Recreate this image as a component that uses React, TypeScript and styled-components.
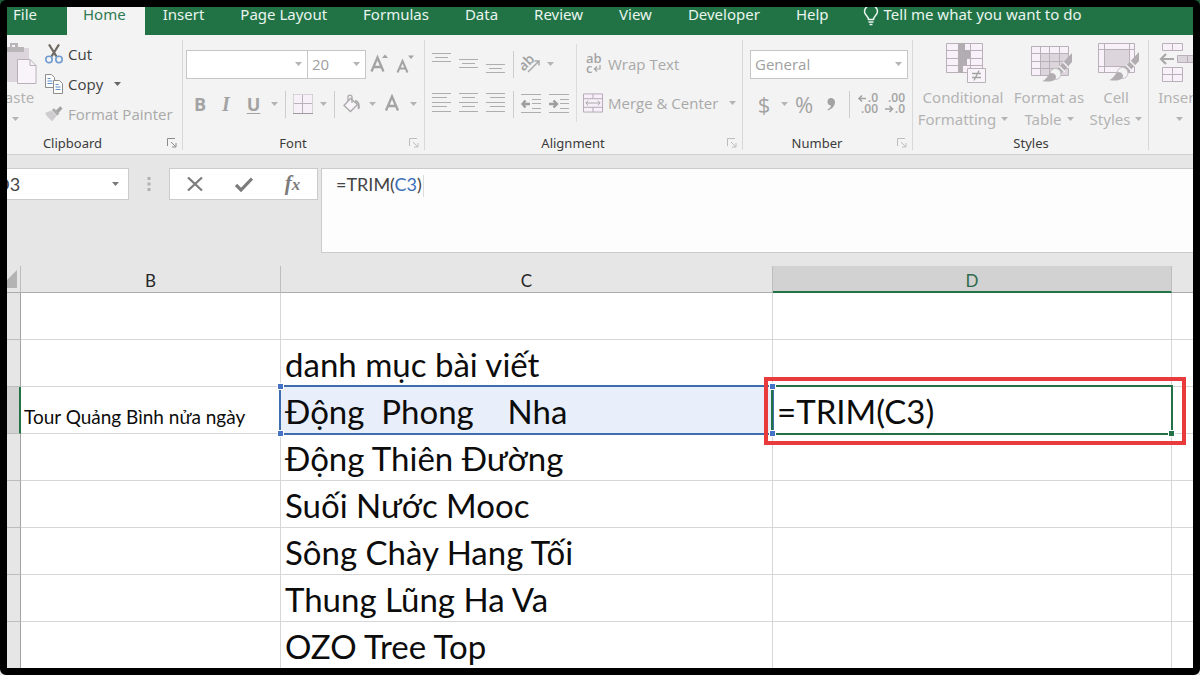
import React from 'react';
import styled, { createGlobalStyle, css } from 'styled-components';

const uiFont = '"Open Sans", "Noto Sans", sans-serif';
const wideUiFont = '"Noto Sans", "Open Sans", sans-serif';
const cellFont = 'Lato, "Noto Sans", sans-serif';
const muted = '#a9a9a9';
const iconLine = '#b9b0ba';

const GlobalStyle = createGlobalStyle`
  *, *::before, *::after { box-sizing: border-box; }
  body {
    margin: 0;
    background: linear-gradient(#1c5b38, #e6e6e6);
    font-family: ${uiFont};
  }
  button, input, select { font: inherit; color: inherit; }
`;

const Window = styled.main`
  height: 100vh;
  display: flex;
  flex-direction: column;
  overflow: hidden;
  border: 7px solid #000;
  border-radius: 6px;
  background: #fff;
`;

/* ---------- tabs ---------- */

const TabBar = styled.nav`
  display: flex;
  flex: none;
  height: 28px;
  background: #217346;
  overflow: hidden;
`;

const Tab = styled.button<{ $active?: boolean; $file?: boolean }>`
  flex: none;
  display: flex;
  align-items: flex-start;
  border: 0;
  padding: ${p => (p.$file ? '0 30px 0 6px' : p.$active ? '0 19px 0 16px' : '0 18px')};
  font-family: ${wideUiFont};
  font-size: 15px;
  line-height: 14px;
  white-space: nowrap;
  color: ${p => (p.$active ? '#2f7a52' : '#e9f5ee')};
  background: ${p => (p.$active ? '#f3f3f3' : 'transparent')};
`;

const TellMe = styled(Tab)`
  gap: 5px;
  padding: 0 16px;
`;

/* ---------- ribbon ---------- */

const Ribbon = styled.section`
  flex: none;
  display: flex;
  height: 120px;
  overflow: hidden;
  background: #f3f3f3;
  border-bottom: 1px solid #cfcfcf;
`;

const Group = styled.div<{ $w?: number; $bleed?: number }>`
  flex: ${p => (p.$w ? `0 0 ${p.$w}px` : '1 0 0')};
  min-width: 0;
  margin-left: ${p => -(p.$bleed ?? 0)}px;
  display: flex;
  flex-direction: column;
  position: relative;
  &:not(:last-child)::after {
    content: '';
    position: absolute;
    right: 0;
    top: 5px;
    bottom: 4px;
    width: 1px;
    background: #d8d8d8;
  }
`;

const GroupBody = styled.div<{ $pad?: string }>`
  height: 98px;
  display: flex;
  padding: ${p => p.$pad ?? '0'};
`;

const GroupFooter = styled.div`
  display: flex;
  align-items: center;
  height: 20px;
  font-family: ${wideUiFont};
  font-size: 13px;
  line-height: 20px;
  color: #3b3b3b;
`;

const GroupName = styled.span`
  flex: 1;
  text-align: center;
`;

const Launcher = styled.button<{ $strong?: boolean }>`
  display: flex;
  width: 22px;
  border: 0;
  padding: 0 0 0 6px;
  background: none;
  color: ${p => (p.$strong ? '#8a8a8a' : '#bdbdbd')};
`;

const Stack = styled.div`
  display: flex;
  flex-direction: column;
`;

const ClipboardList = styled(Stack)`
  padding-left: 8px;
`;

const AlignStack = styled(Stack)`
  width: 148px;
  padding-top: 9px;
`;

const Row = styled.div<{ $pad?: number }>`
  display: flex;
  align-items: center;
  height: 40px;
  padding-left: ${p => p.$pad ?? 0}px;
`;

const Command = styled.button<{ $h?: number }>`
  display: flex;
  align-items: center;
  gap: 5px;
  height: ${p => p.$h ?? 40}px;
  border: 0;
  padding: 0;
  background: none;
  font-size: 15px;
  white-space: nowrap;
  color: #3f3f3f;
  &:disabled { color: ${muted}; }
`;

const CaretSlot = styled.span`
  display: flex;
  margin-left: 6px;
`;

const Tool = styled.button<{ $w: number }>`
  flex: none;
  display: flex;
  align-items: center;
  justify-content: center;
  width: ${p => p.$w}px;
  height: 32px;
  border: 0;
  padding: 0;
  background: none;
  font-size: 18px;
  line-height: 24px;
  color: #a3a3a3;
`;

const Glyph = styled.span<{ $kind: 'bold' | 'italic' | 'underline' }>`
  font-weight: 700;
  ${p => p.$kind === 'italic' && css`
    font-family: "Liberation Serif", serif;
    font-style: italic;
    font-size: 20px;
  `}
  ${p => p.$kind === 'underline' && css`
    text-decoration: underline;
    text-decoration-thickness: 1px;
    text-underline-offset: 2px;
  `}
`;

const Symbol = styled.span`
  font-size: 22px;
  line-height: 28px;
`;

const Separator = styled.span<{ $w: number }>`
  flex: none;
  width: ${p => p.$w}px;
  height: 27px;
  display: flex;
  justify-content: center;
  &::before {
    content: '';
    width: 1px;
    background: #cdcdcd;
  }
`;

const Divided = styled(Stack)`
  margin-top: 9px;
  height: 78px;
  padding-left: 6px;
  border-left: 1px solid #dcdcdc;
`;

const SelectBox = styled.label<{ $w: number }>`
  position: relative;
  display: flex;
  width: ${p => p.$w}px;
  height: 29px;
  border: 1px solid #c6c6c6;
  background: #fff;
  & + & { margin-left: -1px; }
  svg { position: absolute; right: 5px; top: 11px; }
`;

const Select = styled.select`
  appearance: none;
  width: 100%;
  border: 0;
  padding: 0 4px;
  background: transparent;
  font-size: 15px;
  color: #a0a0a0;
  opacity: 1;
`;

const BigCommand = styled.button<{ $w: number; $top?: number }>`
  flex: none;
  display: flex;
  flex-direction: column;
  align-items: center;
  width: ${p => p.$w}px;
  border: 0;
  padding: ${p => p.$top ?? 0}px 0 0;
  background: none;
  font-family: ${wideUiFont};
  font-size: 15px;
  line-height: 22px;
  white-space: nowrap;
  color: #b3b3b3;
`;

const BigIcon = styled.span<{ $indent?: boolean }>`
  display: flex;
  height: 44px;
  padding-left: ${p => (p.$indent ? 5 : 0)}px;
`;

const BigLine = styled.span`
  display: flex;
  align-items: center;
  gap: 5px;
  height: 22px;
`;

/* ---------- formula bar ---------- */

const FormulaBar = styled.section`
  flex: none;
  display: flex;
  align-items: flex-start;
  padding: 13px 0;
  background: #e6e6e6;
`;

const NameBox = styled.div`
  flex: none;
  display: flex;
  align-items: center;
  width: 122px;
  height: 32px;
  overflow: hidden;
  border: 1px solid #cbcbcb;
  border-left: 0;
  background: #fff;
  padding-right: 9px;
`;

const NameInput = styled.input`
  flex: 1;
  min-width: 0;
  margin-left: -11px;
  border: 0;
  padding: 0;
  outline: 0;
  font-family: ${cellFont};
  font-size: 18px;
  color: #444;
`;

const DotGrip = styled.span`
  flex: none;
  display: flex;
  justify-content: center;
  align-items: center;
  width: 40px;
  height: 32px;
`;

const EntryButtons = styled.div`
  flex: none;
  display: flex;
  width: 149px;
  height: 32px;
  border: 1px solid #cbcbcb;
  background: #fff;
`;

const EntryButton = styled.button`
  flex: 1;
  display: flex;
  align-items: center;
  justify-content: center;
  border: 0;
  padding: 0;
  background: none;
  color: #7c7c7c;
`;

const FxMark = styled.span`
  font: italic 700 21px/24px "Liberation Serif", serif;
  small { font-size: 17px; }
`;

const FormulaInput = styled.div`
  flex: 1;
  min-width: 0;
  height: 85px;
  margin-left: 3px;
  padding: 3px 14px;
  border: 1px solid #cbcbcb;
  border-right: 0;
  background: #fdfdfd;
  font-family: ${cellFont};
  font-size: 18px;
  line-height: 24px;
  color: #444;
  outline: 0;
`;

const Reference = styled.span`
  color: #3a6fb7;
`;

const Caret = styled.span`
  display: inline-block;
  width: 1px;
  height: 22px;
  margin-left: 1px;
  vertical-align: middle;
  background: #dcdcdc;
`;

/* ---------- sheet ---------- */

const Sheet = styled.table`
  flex: none;
  width: 100%;
  table-layout: fixed;
  border-collapse: separate;
  border-spacing: 0;
  font-family: ${cellFont};
`;

const ColumnHead = styled.th<{ $selected?: boolean }>`
  height: 27px;
  padding: 4px 0 0;
  font-size: 17px;
  font-weight: 400;
  line-height: 20px;
  color: ${p => (p.$selected ? '#2f6b4c' : '#262626')};
  background: ${p => (p.$selected ? '#d2d2d2' : '#e6e6e6')};
  border-right: 1px solid #bdbdbd;
  border-bottom: ${p => (p.$selected ? '2px solid #217346' : '1px solid #ababab')};
  &:last-child { border-right: 0; }
`;

const CornerHead = styled(ColumnHead)`
  padding: 0;
  svg { display: block; }
`;

const RowHead = styled.th<{ $selected?: boolean }>`
  height: 47px;
  padding: 0;
  background: ${p => (p.$selected ? '#d2d2d2' : '#e6e6e6')};
  border-right: ${p => (p.$selected ? '2px solid #217346' : '1px solid #a3a3a3')};
  border-bottom: 1px solid #bdbdbd;
`;

const Cell = styled.td<{ $small?: boolean }>`
  position: relative;
  height: 47px;
  padding: ${p => (p.$small ? '0 2px 4px 3px' : '2px 4px 0')};
  border-right: 1px solid #d6d6d6;
  border-bottom: 1px solid #d6d6d6;
  font-size: ${p => (p.$small ? 19 : 33)}px;
  line-height: ${p => (p.$small ? 24 : 44)}px;
  vertical-align: ${p => (p.$small ? 'bottom' : 'middle')};
  white-space: pre;
  color: #0c0c0c;
  &:last-child { border-right: 0; }
`;

const ReferencedCell = styled(Cell)`
  background: #e9effa;
`;

const CellInput = styled.input`
  display: block;
  width: 100%;
  height: 44px;
  border: 0;
  padding: 0;
  outline: 0;
  background: transparent;
`;

const Outline = styled.span<{ $color: string }>`
  position: absolute;
  inset: -2px;
  z-index: ${p => (p.$color === '#217346' ? 2 : 1)};
  border: 2px solid ${p => p.$color};
  pointer-events: none;
`;

const Handle = styled.span<{ $at: 'tl' | 'bl' | 'br'; $color: string }>`
  position: absolute;
  z-index: 3;
  width: 5px;
  height: 5px;
  background: ${p => p.$color};
  outline: 1px solid #fff;
  ${p => (p.$at[0] === 't' ? 'top: -3px;' : 'bottom: -3px;')}
  ${p => (p.$at[1] === 'l' ? 'left: -3px;' : 'right: -3px;')}
`;

const Highlight = styled.span`
  position: absolute;
  z-index: 4;
  inset: -10px -15px -12px -9px;
  border: 4px solid #e93b3b;
  pointer-events: none;
`;

/* ---------- icons ---------- */

const Down = ({ color = '#b4b4b4' }: { color?: string }) => (
  <svg width="7" height="4" viewBox="0 0 7 4" aria-hidden="true"><path d="M0 0h7L3.500 4z" fill={color} /></svg>
);

const LauncherIcon = () => (
  <svg width="10" height="10" viewBox="0 0 10 10" fill="none" stroke="currentColor" aria-hidden="true">
    <path d="M.5 8V.5H8M4 4l4.500 4.500M9 5v4H5" />
  </svg>
);

const Bulb = () => (
  <svg width="16" height="19" viewBox="0 0 16 19" fill="none" stroke="#e9f5ee" strokeWidth="1.500" aria-hidden="true">
    <path d="M5.500 12.500c0-3-4-4.500-4-8C1.500 1 4.500-1.500 8-1.500S14.500 1 14.500 4.500c0 3.500-4 5-4 8zM5.500 15h5M6.500 17.500h3" />
  </svg>
);

const PasteIcon = () => (
  <svg width="44" height="44" viewBox="0 0 44 44" aria-hidden="true">
    <path d="M2 6h34v34H2z" fill="#dcd6dc" />
    <path d="M10 5h7V1h8v4h6v5H10z" fill="#b9b5b9" />
    <path d="M19 3h3v2h-3z" fill="#f3f3f3" />
    <path d="M24.500 17.500H37l6 6v18H24.500z" fill="#f8f4f9" stroke={iconLine} />
    <path d="M37 17.500v6h6" fill="none" stroke={iconLine} />
  </svg>
);

const CutIcon = () => (
  <svg width="18" height="20" viewBox="0 0 18 20" fill="none" aria-hidden="true">
    <path d="M4 .5l7.500 12M14 .5l-7.500 12" stroke="#6e6862" strokeWidth="2.200" />
    <circle cx="4" cy="15.500" r="3.200" stroke="#6f9bd0" strokeWidth="1.600" />
    <circle cx="14" cy="15.500" r="3.200" stroke="#6f9bd0" strokeWidth="1.600" />
  </svg>
);

const CopyIcon = () => (
  <svg width="18" height="20" viewBox="0 0 18 20" fill="#fdfdfd" stroke="#8d8d8d" aria-hidden="true">
    <path d="M.5.500h6l3 3v10h-9z" />
    <path d="M2.500 4.500h3M2.500 7h5M2.500 9.500h5" stroke="#5f8fc8" />
    <path d="M8.500 6.500h6l3 3v10h-9z" />
    <path d="M10.500 10.500h3M10.500 13h5M10.500 15.500h5" stroke="#5f8fc8" />
  </svg>
);

const BrushIcon = () => (
  <svg width="18" height="18" viewBox="0 0 20 18" aria-hidden="true">
    <path d="M0 8l7-3 6 6-5 6C5 15 2 12 0 8z" fill="#cfcccf" />
    <path d="M7.500 4.500L10 2.500l6 6-2.500 2.500z" fill="#adadad" />
    <path d="M12 5l5-4.500 2.500 2.500L15 8z" fill="#a3a3a3" />
  </svg>
);

const GrowFont = ({ shrink }: { shrink?: boolean }) => (
  <svg width="19" height="22" viewBox="0 0 19 22" aria-hidden="true">
    {shrink
      ? <><path d="M1.500 19.500L6.500 8l5 11.500M3.500 15.500h6" fill="none" stroke="#a3a3a3" strokeWidth="2" /><path d="M12 2.500h6L15 6z" fill="#a3a3a3" /></>
      : <><path d="M1.500 18.500L7.500 4.500l6 14M3.500 14h8" fill="none" stroke="#a3a3a3" strokeWidth="2.300" /><path d="M12 5h6l-3-3.500z" fill="#a3a3a3" /></>}
  </svg>
);

const BordersIcon = () => (
  <svg width="20" height="20" viewBox="0 0 20 20" fill="none" stroke={iconLine} aria-hidden="true">
    <path d="M.5.500h19v19H.5z" fill="#f7f0f8" stroke="none" />
    <path d="M.5.500h19M.5.500v19M19.500.500v19" strokeDasharray="1 1" />
    <path d="M9.500 1v18M1 9.500h18" />
    <path d="M0 19.500h20" stroke="#a09aa0" />
  </svg>
);

const FillIcon = () => (
  <svg width="18" height="20" viewBox="0 0 18 20" fill="none" stroke="#a9a9a9" strokeWidth="1.300" aria-hidden="true">
    <path d="M7.500 4.500L1 11.500l6.500 6 7-7z" fill="#f8f4f9" />
    <path d="M5 7V3c0-2.500 4-2.500 4 0v6" />
    <path d="M12 7c3 0 4.500 3 3.500 8" strokeWidth="2" />
  </svg>
);

const FontColorIcon = () => (
  <svg width="16" height="20" viewBox="0 0 16 20" fill="none" stroke="#a3a3a3" strokeWidth="2.300" aria-hidden="true">
    <path d="M2 16.500L8 2.500l6 14M4 12h8" />
  </svg>
);

const Lines = ({ rows }: { rows: [number, number, number][] }) => (
  <svg width="19" height="22" viewBox="0 0 19 22" stroke="#aeaeae" aria-hidden="true">
    {rows.map(([y, a, b]) => <path key={y} d={`M${a} ${y}.5H${b}`} />)}
  </svg>
);

const valign = (y: number): [number, number, number][] => [[y, 0, 19], [y + 4, 3, 16], [y + 8, 0, 19]];
const halign = (a: number, b: number): [number, number, number][] => [[0, 0, 19], [4, a, b], [9, 0, 19], [13, a, b], [18, 0, 19]];

const AngleIcon = () => (
  <svg width="20" height="20" viewBox="0 0 20 20" fill="none" stroke="#a9a9a9" aria-hidden="true">
    <text x="-2" y="13" transform="rotate(-45 6 10)" fontSize="14" fontWeight="600" fill="#a0a0a0" stroke="none">ab</text>
    <path d="M7 18L18 7M13.500 7H18v4.500" strokeWidth="1.500" />
  </svg>
);

const IndentIcon = ({ inward }: { inward?: boolean }) => (
  <svg width="20" height="20" viewBox="0 0 20 20" stroke="#aeaeae" aria-hidden="true">
    <path d="M0 .5h20M11 5.500h9M11 9.500h9M11 14.500h9M0 18.500h20" />
    {inward
      ? <path d="M0 10h7M4.500 6.500L8 10l-3.500 3.500" fill="none" stroke="#9e9e9e" strokeWidth="2.400" />
      : <path d="M2 10h7M4.500 6.500L1.500 10l3 3.500" fill="none" stroke="#9e9e9e" strokeWidth="2.400" />}
  </svg>
);

const WrapIcon = () => (
  <svg width="20" height="22" viewBox="0 0 20 22" aria-hidden="true">
    <g fontSize="13" fontWeight="600" fill="#a3a3a3">
      <text x="3" y="10">ab</text>
      <text x="3" y="20">c</text>
    </g>
    <path d="M17 12v4h-5M14 13.500L11.500 16l2.500 2.500" fill="none" stroke="#a3a3a3" strokeWidth="1.200" />
  </svg>
);

const MergeIcon = () => (
  <svg width="20" height="20" viewBox="0 0 21 20" fill="none" stroke="#b3a6b5" aria-hidden="true">
    <path d="M.5.500h20v19H.5z" fill="#f7f0f8" />
    <path d="M.5 5.500h20M.5 14.500h20M10.500.500v5M10.500 14.500v5" />
    <path d="M3 10h15M5.500 7.500L3 10l2.500 2.500M15.500 7.500L18 10l-2.500 2.500" stroke="#a3a3a3" />
  </svg>
);

const DecimalIcon = ({ less }: { less?: boolean }) => (
  <svg width="22" height="22" viewBox="0 0 22 22" aria-hidden="true">
    <g fontSize="12" fontWeight="600" fill="#a3a3a3">
      <text x="21" y="9" textAnchor="end">{less ? '.00' : '.0'}</text>
      <text x="21" y="20" textAnchor="end">{less ? '.0' : '.00'}</text>
    </g>
    {less
      ? <path d="M1 16h7M5.500 13l3 3-3 3" fill="none" stroke="#a3a3a3" strokeWidth="1.600" />
      : <path d="M2 5.500h7M5 2.500l-3 3 3 3" fill="none" stroke="#a3a3a3" strokeWidth="1.600" />}
  </svg>
);

const CommaIcon = () => (
  <svg width="12" height="14" viewBox="0 0 12 14" aria-hidden="true">
    <path d="M5.500 1a4 4 0 0 1 4.500 4c0 4-3 7-7 8.500l-.5-1.200C5 11.200 6 10 6 8.500A3.800 3.800 0 0 1 5.500 1z" fill="#a3a3a3" />
  </svg>
);

const ConditionalIcon = () => (
  <svg width="40" height="42" viewBox="0 0 40 42" stroke={iconLine} aria-hidden="true">
    <path d="M.5 1.500h36v29H.5z" fill="#f8f1f9" />
    <path d="M.5 8.500h36M.5 16.500h36M.5 23.500h36M12.500 1.500v29M24.500 1.500v29" fill="none" />
    <path d="M12 1h7v7h5v8h-3v7h-4v8h-5z" fill="#b1adb1" stroke="none" />
    <path d="M21.500 26.500h18v14h-18z" fill="#f8f4f9" />
    <path d="M26 31.500h9M26 35.500h9M33 28.500l-5 10" stroke="#a3a3a3" strokeWidth="1.300" />
  </svg>
);

const PaintBrush = () => (
  <g stroke="none">
    <path d="M41 11v9L30 32l-5-4z" fill="#b1adb1" />
    <path d="M32 20l6 6M28 24l6 6" stroke="#f3f3f3" strokeWidth="1.500" />
    <circle cx="24.500" cy="32" r="5.500" fill="#f3f3f3" stroke="#c4bfc4" />
    <path d="M11 39c5-1 5-6 9-8 4 0 6 3 4.500 6-3 3-8 3-13.500 2z" fill="#b1adb1" />
  </g>
);

const FormatTableIcon = () => (
  <svg width="42" height="42" viewBox="0 0 42 42" stroke={iconLine} aria-hidden="true">
    <path d="M.5 4.500h37v29H.5z" fill="#f8f1f9" />
    <path d="M10 12h27v21H10z" fill="#dcd6dc" stroke="none" />
    <path d="M.5 11.500h37M.5 19.500h37M.5 26.500h37M9.500 4.500v29M18.500 4.500v29M28.500 4.500v29" fill="none" />
    <PaintBrush />
  </svg>
);

const CellStylesIcon = () => (
  <svg width="42" height="42" viewBox="0 0 42 42" stroke={iconLine} aria-hidden="true">
    <path d="M.5 1.500h36v29H.5z" fill="#f8f1f9" />
    <path d="M.5 7.500h36M.5 24.500h36M6.500 1.500v29M31.500 1.500v29" fill="none" />
    <path d="M7 8h24v16H7z" fill="#dcd6dc" stroke="none" />
    <g transform="translate(0 -1)"><PaintBrush /></g>
  </svg>
);

const InsertIcon = () => (
  <svg width="40" height="42" viewBox="0 0 40 42" stroke={iconLine} fill="#f8f1f9" aria-hidden="true">
    <path d="M3.500 1.500h20v7h-20zM13.500 1.500v7" />
    <path d="M3.500 25.500h20v14h-20zM13.500 25.500v14M3.500 32.500h20" />
    <path d="M18.500 13.500h30v7h-30zM28.500 13.500v7" fill="#dcd6dc" />
    <path d="M2 17h13M7 12l-5 5 5 5" fill="none" stroke="#a9a9a9" strokeWidth="2.200" />
  </svg>
);

const CancelIcon = () => (
  <svg width="16" height="14" viewBox="0 0 16 14" fill="none" stroke="currentColor" strokeWidth="2.200" aria-hidden="true">
    <path d="M1 .5l14 13M15 .5l-14 13" />
  </svg>
);

const AcceptIcon = () => (
  <svg width="18" height="15" viewBox="0 0 18 15" fill="none" stroke="currentColor" strokeWidth="3.200" aria-hidden="true">
    <path d="M1 8l5 5L17 1.500" />
  </svg>
);

const GripIcon = () => (
  <svg width="4" height="14" viewBox="0 0 4 14" fill="#b1b1b1" aria-hidden="true">
    <path d="M.5 0h3v3h-3zM.5 5.500h3v3h-3zM.5 11h3v3h-3z" />
  </svg>
);

const CornerIcon = () => (
  <svg width="12" height="20" viewBox="0 0 12 20" aria-hidden="true"><path d="M10 1v18H0V11z" fill="#b3b3b3" /></svg>
);

/* ---------- page ---------- */

const tabs = ['Insert', 'Page Layout', 'Formulas', 'Data', 'Review', 'View', 'Developer', 'Help'];

const places = ['Động Thiên Đường', 'Suối Nước Mooc', 'Sông Chày Hang Tối', 'Thung Lũng Ha Va', 'OZO Tree Top'];

const Footer = ({ name, launcher, strong }: { name: string; launcher?: boolean; strong?: boolean }) => (
  <GroupFooter>
    <GroupName>{name}</GroupName>
    {launcher && <Launcher $strong={strong} aria-label={`${name} settings`}><LauncherIcon /></Launcher>}
  </GroupFooter>
);

export default function App() {
  return (
    <Window>
      <GlobalStyle />
      <TabBar>
        <Tab $file>File</Tab>
        <Tab $active>Home</Tab>
        {tabs.map(t => <Tab key={t}>{t}</Tab>)}
        <TellMe><Bulb />Tell me what you want to do</TellMe>
      </TabBar>

      <Ribbon>
        <Group $w={199} $bleed={23}>
          <GroupBody $pad="4px 0 0 9px">
            <BigCommand $w={44} $top={3} disabled>
              <BigIcon><PasteIcon /></BigIcon>
              <BigLine>Paste</BigLine>
              <BigLine><Down /></BigLine>
            </BigCommand>
            <ClipboardList>
              <Command $h={30}><CutIcon />Cut</Command>
              <Command $h={30}><CopyIcon />Copy<CaretSlot><Down color="#666" /></CaretSlot></Command>
              <Command $h={30} disabled><BrushIcon />Format Painter</Command>
            </ClipboardList>
          </GroupBody>
          <Footer name="Clipboard" launcher strong />
        </Group>

        <Group $w={242}>
          <GroupBody $pad="9px 0 0 3px">
            <Stack>
              <Row>
                <SelectBox $w={122}><Select disabled aria-label="Font name"><option></option></Select><Down /></SelectBox>
                <SelectBox $w={59}><Select disabled aria-label="Font size"><option>20</option></Select><Down /></SelectBox>
                <Tool $w={26} disabled aria-label="Increase font size"><GrowFont /></Tool>
                <Tool $w={26} disabled aria-label="Decrease font size"><GrowFont shrink /></Tool>
              </Row>
              <Row $pad={1}>
                <Tool $w={26} disabled><Glyph $kind="bold">B</Glyph></Tool>
                <Tool $w={26} disabled><Glyph $kind="italic">I</Glyph></Tool>
                <Tool $w={29} disabled><Glyph $kind="underline">U</Glyph></Tool>
                <Tool $w={12} disabled aria-label="Underline style"><Down /></Tool>
                <Separator $w={11} />
                <Tool $w={24} disabled aria-label="Borders"><BordersIcon /></Tool>
                <Tool $w={16} disabled aria-label="Border style"><Down /></Tool>
                <Separator $w={7} />
                <Tool $w={28} disabled aria-label="Fill color"><FillIcon /></Tool>
                <Tool $w={12} disabled aria-label="Fill color list"><Down /></Tool>
                <Tool $w={28} disabled aria-label="Font color"><FontColorIcon /></Tool>
                <Tool $w={14} disabled aria-label="Font color list"><Down /></Tool>
              </Row>
            </Stack>
          </GroupBody>
          <Footer name="Font" launcher />
        </Group>

        <Group $w={318}>
          <GroupBody $pad="0 0 0 3px">
            <AlignStack>
              <Row>
                <Tool $w={27} disabled aria-label="Top align"><Lines rows={valign(0)} /></Tool>
                <Tool $w={27} disabled aria-label="Middle align"><Lines rows={valign(6)} /></Tool>
                <Tool $w={27} disabled aria-label="Bottom align"><Lines rows={valign(11)} /></Tool>
                <Separator $w={8} />
                <Tool $w={28} disabled aria-label="Orientation"><AngleIcon /></Tool>
                <Tool $w={10} disabled aria-label="Orientation list"><Down /></Tool>
              </Row>
              <Row>
                <Tool $w={27} disabled aria-label="Align left"><Lines rows={halign(0, 15)} /></Tool>
                <Tool $w={27} disabled aria-label="Center"><Lines rows={halign(3, 16)} /></Tool>
                <Tool $w={27} disabled aria-label="Align right"><Lines rows={halign(4, 19)} /></Tool>
                <Separator $w={8} />
                <Tool $w={28} disabled aria-label="Decrease indent"><IndentIcon /></Tool>
                <Tool $w={27} disabled aria-label="Increase indent"><IndentIcon inward /></Tool>
              </Row>
            </AlignStack>
            <Divided>
              <Command disabled><WrapIcon />Wrap Text</Command>
              <Command disabled><MergeIcon />Merge &amp; Center<CaretSlot><Down /></CaretSlot></Command>
            </Divided>
          </GroupBody>
          <Footer name="Alignment" launcher />
        </Group>

        <Group $w={170}>
          <GroupBody $pad="9px 0 0 7px">
            <Stack>
              <Row>
                <SelectBox $w={158}><Select disabled aria-label="Number format"><option>General</option></Select><Down /></SelectBox>
              </Row>
              <Row>
                <Tool $w={28} disabled><Symbol>$</Symbol></Tool>
                <Tool $w={12} disabled aria-label="Currency list"><Down /></Tool>
                <Tool $w={28} disabled><Symbol>%</Symbol></Tool>
                <Tool $w={26} disabled aria-label="Comma style"><CommaIcon /></Tool>
                <Separator $w={11} />
                <Tool $w={26} disabled aria-label="Increase decimal"><DecimalIcon /></Tool>
                <Tool $w={28} disabled aria-label="Decrease decimal"><DecimalIcon less /></Tool>
              </Row>
            </Stack>
          </GroupBody>
          <Footer name="Number" launcher />
        </Group>

        <Group $w={236}>
          <GroupBody $pad="7px 0 0 2px">
            <BigCommand $w={96} disabled>
              <BigIcon $indent><ConditionalIcon /></BigIcon>
              <BigLine>Conditional</BigLine>
              <BigLine>Formatting<Down /></BigLine>
            </BigCommand>
            <BigCommand $w={76} disabled>
              <BigIcon $indent><FormatTableIcon /></BigIcon>
              <BigLine>Format as</BigLine>
              <BigLine>Table<Down /></BigLine>
            </BigCommand>
            <BigCommand $w={58} disabled>
              <BigIcon $indent><CellStylesIcon /></BigIcon>
              <BigLine>Cell</BigLine>
              <BigLine>Styles<Down /></BigLine>
            </BigCommand>
          </GroupBody>
          <Footer name="Styles" />
        </Group>

        <Group>
          <GroupBody $pad="7px 0 0 0">
            <BigCommand $w={60} disabled>
              <BigIcon><InsertIcon /></BigIcon>
              <BigLine>Insert</BigLine>
              <BigLine><Down /></BigLine>
            </BigCommand>
          </GroupBody>
        </Group>
      </Ribbon>

      <FormulaBar>
        <NameBox>
          <NameInput aria-label="Name box" defaultValue="D3" />
          <Down color="#7a7a7a" />
        </NameBox>
        <DotGrip><GripIcon /></DotGrip>
        <EntryButtons>
          <EntryButton aria-label="Cancel"><CancelIcon /></EntryButton>
          <EntryButton aria-label="Enter"><AcceptIcon /></EntryButton>
          <EntryButton aria-label="Insert function"><FxMark>f<small>x</small></FxMark></EntryButton>
        </EntryButtons>
        <FormulaInput role="textbox" aria-label="Formula bar" contentEditable suppressContentEditableWarning spellCheck={false}>
          =TRIM(<Reference>C3</Reference>)<Caret />
        </FormulaInput>
      </FormulaBar>

      <Sheet>
        <colgroup>
          <col width={14} />
          <col width={260} />
          <col width={492} />
          <col width={399} />
          <col />
        </colgroup>
        <thead>
          <tr>
            <CornerHead aria-label="Select all"><CornerIcon /></CornerHead>
            <ColumnHead>B</ColumnHead>
            <ColumnHead>C</ColumnHead>
            <ColumnHead $selected>D</ColumnHead>
            <ColumnHead />
          </tr>
        </thead>
        <tbody>
          <tr><RowHead /><Cell /><Cell /><Cell /><Cell /></tr>
          <tr><RowHead /><Cell /><Cell>danh mục bài viết</Cell><Cell /><Cell /></tr>
          <tr>
            <RowHead $selected />
            <Cell $small>Tour Quảng Bình nửa ngày</Cell>
            <ReferencedCell>
              {'Động  Phong    Nha'}
              <Outline $color="#3f6cad" />
              <Handle $at="tl" $color="#4472c4" />
              <Handle $at="bl" $color="#4472c4" />
            </ReferencedCell>
            <Cell>
              <CellInput aria-label="Cell D3" defaultValue="=TRIM(C3)" />
              <Outline $color="#217346" />
              <Handle $at="tl" $color="#4472c4" />
              <Handle $at="bl" $color="#4472c4" />
              <Handle $at="br" $color="#217346" />
              <Highlight />
            </Cell>
            <Cell />
          </tr>
          {places.map(p => (
            <tr key={p}><RowHead /><Cell /><Cell>{p}</Cell><Cell /><Cell /></tr>
          ))}
        </tbody>
      </Sheet>
    </Window>
  );
}
